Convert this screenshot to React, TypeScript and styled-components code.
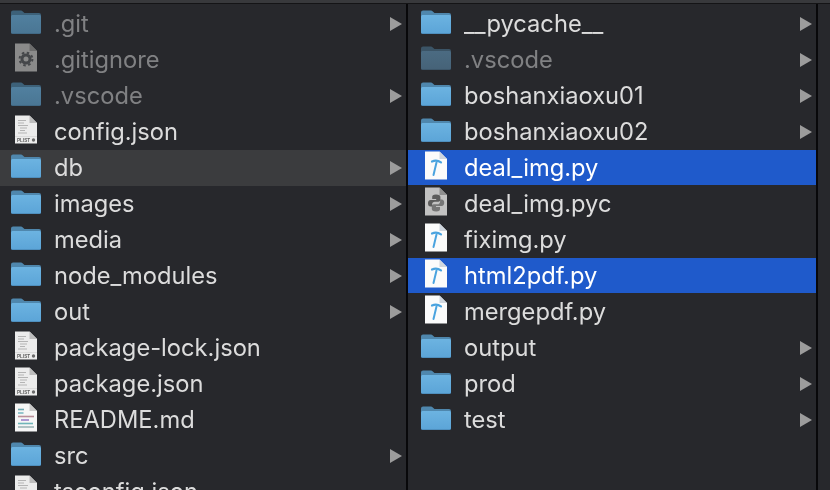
import React from "react"
import styled, { createGlobalStyle } from "styled-components"

const GlobalStyle = createGlobalStyle`
  html, body {
    margin: 0;
    padding: 0;
    background: #27282c;
  }
  body {
    width: 830px;
    height: 490px;
    overflow: hidden;
    font-family: Inter, "Noto Sans", "Liberation Sans", sans-serif;
  }
`

const Window = styled.div`
  width: 830px;
  height: 490px;
  overflow: hidden;
  display: flex;
  flex-direction: column;
  background: #27282c;
`

const TopEdge = styled.div`
  flex: none;
  height: 3px;
  background: #38393c;
  border-bottom: 1px solid #141416;
`

const Browser = styled.div`
  flex: 1;
  min-height: 0;
  padding-top: 2px;
  display: grid;
  grid-template-columns: 406px 408px 1fr;
  column-gap: 2px;
  background: #08080a;
`

const Column = styled.div`
  background: #27282c;
  margin-top: -2px;
  padding-top: 2px;
  overflow: hidden;
`

const Row = styled.div<{ $state?: "selected" | "open"; $inset: number }>`
  height: 36px;
  box-sizing: border-box;
  display: flex;
  align-items: center;
  padding: 0 4px 0 ${(p) => p.$inset}px;
  background: ${(p) =>
    p.$state === "selected"
      ? "#1f5acb"
      : p.$state === "open"
        ? "#3b3c3e"
        : "transparent"};
  box-shadow: ${(p) =>
    p.$state === "selected" ? "inset 0 -1px 0 #27282c" : "none"};
`

const Label = styled.span<{ $dim?: boolean; $selected?: boolean }>`
  flex: 1;
  margin-left: 13px;
  font-size: 23.7px;
  line-height: 36px;
  white-space: nowrap;
  filter: blur(0.3px);
  color: ${(p) => (p.$selected ? "#ffffff" : p.$dim ? "#808183" : "#dcdcdc")};
`

const Arrow = styled.span`
  flex: none;
  width: 0;
  height: 0;
  border-left: 12px solid #9c9c9c;
  border-top: 7px solid transparent;
  border-bottom: 7px solid transparent;
`

const IconBox = styled.svg`
  flex: none;
  width: 30px;
  height: 36px;
  filter: blur(0.3px);
`

const folderTones = {
  bright: { back: "#4f87ad", top: "#6cb3e1", bottom: "#5ca5d8", edge: "#4a88b5" },
  dim: { back: "#3d6179", top: "#51809f", bottom: "#4a7694", edge: "#3e6580" },
  shade: { back: "#3b5466", top: "#4b6b82", bottom: "#466378", edge: "#3a5264" },
}

type Tone = keyof typeof folderTones

const Folder = ({ tone }: { tone: Tone }) => {
  const c = folderTones[tone]
  const id = `folder-${tone}`
  return (
    <IconBox viewBox="0 0 30 36">
      <defs>
        <linearGradient id={id} x1="0" y1="0" x2="0" y2="1">
          <stop offset="0" stopColor={c.top} />
          <stop offset="1" stopColor={c.bottom} />
        </linearGradient>
      </defs>
      <path
        d="M0 6.5a2 2 0 0 1 2-2h8a2 2 0 0 1 1.5.7L13.5 7H28a2 2 0 0 1 2 2v3H0z"
        fill={c.back}
      />
      <rect x="0" y="9" width="30" height="19" rx="1.5" fill={c.edge} />
      <rect x="0" y="9" width="30" height="18.2" rx="1.5" fill={`url(#${id})`} />
    </IconBox>
  )
}

const Page = ({
  fill = "#f4f4f4",
  fold = "#c9c9c9",
  children,
}: {
  fill?: string
  fold?: string
  children?: React.ReactNode
}) => (
  <IconBox viewBox="0 0 30 36">
    <path d="M4 1.5h14.5L26 9v20.5H4z" fill={fill} />
    <path d="M18.5 1.5V9H26z" fill={fold} />
    {children}
  </IconBox>
)

const PlistIcon = () => (
  <Page fill="#ececec" fold="#bdbdbd">
    <g stroke="#b4b4b4" strokeWidth="1">
      <path d="M7 6.5h8M7 9h6M7 11.5h10M9 14h7M9 16.5h5M7 19h9" />
    </g>
    <path d="M4 22.5h22" stroke="#d0d0d0" strokeWidth="0.6" />
    <text x="6" y="27.6" fontSize="4.6" fontWeight="700" fill="#5e5e5e" fontFamily="Liberation Sans, sans-serif">
      PLIST
    </text>
    <circle cx="22.5" cy="26" r="1.7" fill="#6b6b6b" />
  </Page>
)

const GearIcon = () => (
  <Page fill="#8a8a8a" fold="#6c6c6c">
    <circle cx="15" cy="17" r="4" fill="none" stroke="#45474a" strokeWidth="3" />
    <circle
      cx="15"
      cy="17"
      r="6.4"
      fill="none"
      stroke="#45474a"
      strokeWidth="2"
      strokeDasharray="2.5 2.53"
    />
  </Page>
)

const ReadmeIcon = () => (
  <Page fill="#f6f6f6" fold="#c9c9c9">
    <g strokeWidth="1.6" fill="none">
      <path d="M7 7.5h6" stroke="#6fa9b3" />
      <path d="M7 11h5.5" stroke="#7dbac4" />
      <path d="M7 14.5h16" stroke="#b98f9a" />
      <path d="M10 18h8" stroke="#9a80c9" />
      <path d="M7 21.5h15" stroke="#6fb5b9" />
      <path d="M7 25h16" stroke="#9db5b8" />
    </g>
  </Page>
)

const PythonIcon = () => (
  <Page fill="#fbfbfb" fold="#cfd6de">
    <g fill="none" stroke="#4aa3df" strokeLinecap="round">
      <path d="M15.5 12.5L12.5 25" strokeWidth="2" />
      <path d="M11 11.5c3-1.4 6-1.2 9 0.8" strokeWidth="2.2" />
    </g>
  </Page>
)

const CompiledIcon = () => (
  <Page fill="#c2c2c2" fold="#8f8f8f">
    <g fill="#5c5c5c">
      <path d="M15 8.5c-3 0-3.8 1-3.8 2.4V13h4v1H9.6c-1.8 0-2.6 1.3-2.6 3.2 0 2 .8 3.3 2.6 3.3h1.5v-2.2c0-1.5 1.2-2.6 2.6-2.6h3.7c1.2 0 2-.9 2-2.1v-2.7c0-1.4-1.2-2.4-4.4-2.4z" />
      <path d="M15.2 25.5c3 0 3.8-1 3.8-2.4V21h-4v-1h5.6c1.8 0 2.6-1.3 2.6-3.2 0-2-.8-3.3-2.6-3.3h-1.5v2.2c0 1.5-1.2 2.6-2.6 2.6h-3.7c-1.2 0-2 .9-2 2.1v2.7c0 1.4 1.2 2.4 4.4 2.4z" opacity="0.75" />
    </g>
  </Page>
)

const icons = {
  plist: <PlistIcon />,
  gear: <GearIcon />,
  readme: <ReadmeIcon />,
  python: <PythonIcon />,
  compiled: <CompiledIcon />,
  bright: <Folder tone="bright" />,
  dim: <Folder tone="dim" />,
  shade: <Folder tone="shade" />,
}

type Entry = {
  name: string
  icon: keyof typeof icons
  arrow?: boolean
  dim?: boolean
  state?: "selected" | "open"
}

const rootEntries: Entry[] = [
  { name: ".git", icon: "dim", arrow: true, dim: true },
  { name: ".gitignore", icon: "gear", dim: true },
  { name: ".vscode", icon: "dim", arrow: true, dim: true },
  { name: "config.json", icon: "plist" },
  { name: "db", icon: "bright", arrow: true, state: "open" },
  { name: "images", icon: "bright", arrow: true },
  { name: "media", icon: "bright", arrow: true },
  { name: "node_modules", icon: "bright", arrow: true },
  { name: "out", icon: "bright", arrow: true },
  { name: "package-lock.json", icon: "plist" },
  { name: "package.json", icon: "plist" },
  { name: "README.md", icon: "readme" },
  { name: "src", icon: "bright", arrow: true },
  { name: "tsconfig.json", icon: "plist" },
]

const dbEntries: Entry[] = [
  { name: "__pycache__", icon: "bright", arrow: true },
  { name: ".vscode", icon: "shade", arrow: true, dim: true },
  { name: "boshanxiaoxu01", icon: "bright", arrow: true },
  { name: "boshanxiaoxu02", icon: "bright", arrow: true },
  { name: "deal_img.py", icon: "python", state: "selected" },
  { name: "deal_img.pyc", icon: "compiled" },
  { name: "fiximg.py", icon: "python" },
  { name: "html2pdf.py", icon: "python", state: "selected" },
  { name: "mergepdf.py", icon: "python" },
  { name: "output", icon: "bright", arrow: true },
  { name: "prod", icon: "bright", arrow: true },
  { name: "test", icon: "bright", arrow: true },
]

const Listing = ({ entries, inset }: { entries: Entry[]; inset: number }) => (
  <Column>
    {entries.map((entry) => (
      <Row key={entry.name} $state={entry.state} $inset={inset}>
        {icons[entry.icon]}
        <Label $dim={entry.dim} $selected={entry.state === "selected"}>
          {entry.name}
        </Label>
        {entry.arrow && <Arrow />}
      </Row>
    ))}
  </Column>
)

export default function App() {
  return (
    <Window>
      <GlobalStyle />
      <TopEdge />
      <Browser>
        <Listing entries={rootEntries} inset={11} />
        <Listing entries={dbEntries} inset={13} />
        <Column />
      </Browser>
    </Window>
  )
}
